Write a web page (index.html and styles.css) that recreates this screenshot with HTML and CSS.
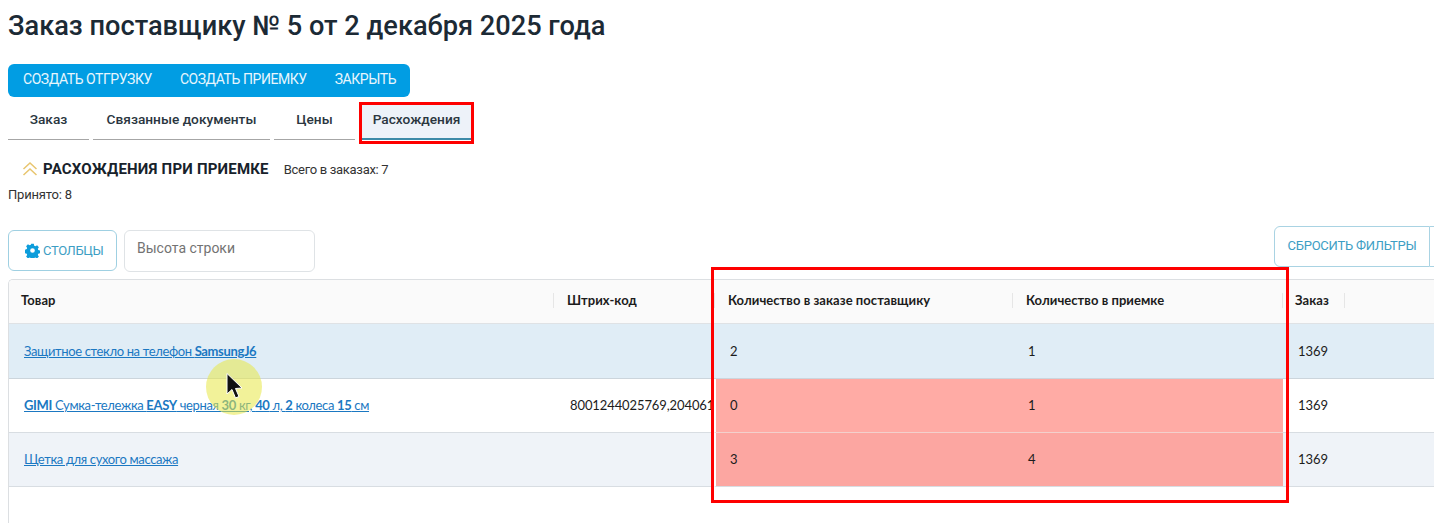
FILE: index.html
```html
<!DOCTYPE html>
<html lang="ru">
<head>
	<meta charset="utf-8">
	<title>Заказ поставщику № 5</title>
	<link rel="stylesheet" href="styles.css">
</head>
<body>

<h1 class="title">Заказ поставщику № 5 от 2 декабря 2025 года</h1>

<div class="actions">
	<a class="action">Создать отгрузку</a>
	<a class="action">Создать приемку</a>
	<a class="action">Закрыть</a>
</div>

<div class="tabs">
	<a class="tab tab-order">Заказ</a>
	<a class="tab tab-docs">Связанные документы</a>
	<a class="tab tab-prices">Цены</a>
	<a class="tab tab-diff active">Расхождения</a>
</div>

<div class="summary">
	<svg class="chevrons" width="16" height="16" viewBox="0 0 16 16" fill="none" stroke="#e8c56e" stroke-width="1.5">
		<path d="M1.5 8 8 2l6.5 6"/>
		<path d="M1.5 14 8 8l6.5 6"/>
	</svg>
	<span class="summary-title">Расхождения при приемке</span>
	<span class="summary-text">Всего в заказах: 7</span>
</div>
<div class="accepted">Принято: 8</div>

<div class="toolbar">
	<a class="btn-columns">
		<svg width="15" height="15" viewBox="0 0 16 16" fill="#0d9ddb">
			<path fill-rule="evenodd" d="M6.600 0.800h2.800l.4 2 1.300.6 1.800-1 1.900 2.100-1.100 1.700.4 1.300 2 .6v2.800l-2 .5-.4 1.300 1.100 1.700-1.900 2.100-1.800-1.100-1.300.6-.4 2H6.600l-.4-2-1.300-.6-1.800 1.100-1.900-2.100 1.100-1.700-.4-1.300-2-.5V7.100l2-.6.4-1.300-1.100-1.700 1.900-2.100 1.800 1 1.300-.6zM8 5.500a2.500 2.500 0 1 0 0 5 2.500 2.500 0 0 0 0-5z"/>
		</svg>
		Столбцы
	</a>
	<div class="row-height">Высота строки</div>
	<div class="toolbar-right">
		<a class="btn-reset">Сбросить фильтры</a>
		<a class="btn-more"></a>
	</div>
</div>

<div class="grid-wrap">
	<table class="grid">
		<colgroup>
			<col class="col-name">
			<col class="col-code">
			<col class="col-qty-order">
			<col class="col-qty-recv">
			<col class="col-order">
			<col>
		</colgroup>
		<thead>
			<tr>
				<th><span class="th-in">Товар</span></th>
				<th><span class="th-in">Штрих-код</span></th>
				<th><span class="th-in">Количество в заказе поставщику</span></th>
				<th><span class="th-in">Количество в приемке</span></th>
				<th><span class="th-in th-order">Заказ</span></th>
				<th><span class="th-in">&nbsp;</span></th>
			</tr>
		</thead>
		<tbody>
			<tr class="row-hover">
				<td><a class="link">Защитное стекло на телефон <b>SamsungJ6</b></a></td>
				<td></td>
				<td>2</td>
				<td>1</td>
				<td class="order">1369</td>
				<td></td>
			</tr>
			<tr class="row-plain">
				<td><a class="link"><b>GIMI</b> Сумка-тележка <b>EASY</b> черная <b>30</b> кг, <b>40</b> л, <b>2</b> колеса <b>15</b> см</a></td>
				<td class="code">8001244025769,2040613</td>
				<td class="bad bad-first">0</td>
				<td class="bad">1</td>
				<td class="order">1369</td>
				<td></td>
			</tr>
			<tr class="row-alt">
				<td><a class="link">Щетка для сухого массажа</a></td>
				<td></td>
				<td class="bad bad-dark bad-first">3</td>
				<td class="bad bad-dark">4</td>
				<td class="order">1369</td>
				<td></td>
			</tr>
		</tbody>
	</table>
</div>

<!-- пометки поверх скриншота -->
<div class="mark mark-tab"></div>
<div class="mark mark-cols"></div>
<div class="pointer">
	<svg width="22" height="29" viewBox="0 0 22 29">
		<path d="M2 .5V21l5-4.500 3.500 8.500 3.500-1.500-3.500-8 6.500-.5z" fill="#111" stroke="#fff" stroke-width="1"/>
	</svg>
</div>

</body>
</html>
```

FILE: styles.css
```css
html, body {
	margin: 0;
	height: 100%;
	overflow: hidden;
	background: #fff;
}
body {
	position: relative;
	padding: 0 0 0 8px;
	box-sizing: border-box;
	font-family: Roboto, "Liberation Sans", sans-serif;
	color: #1f2a33;
}
a { cursor: pointer; }

.title {
	margin: 0;
	padding-top: 11px;
	height: 64px;
	box-sizing: border-box;
	font-size: 27.2px;
	line-height: 31px;
	font-weight: 500;
	color: #1c2a35;
}

.actions {
	display: flex;
	height: 33px;
	width: 402px;
	box-sizing: border-box;
	background: #019de3;
	border-radius: 6px;
	padding: 0 14px 3px 15px;
	justify-content: space-between;
	align-items: center;
}
.action {
	color: #e8f6fd;
	font-size: 14px;
	text-transform: uppercase;
	letter-spacing: -0.45px;
}

.tabs {
	display: flex;
	gap: 4px;
	height: 38px;
	margin-top: 5px;
}
.tab {
	box-sizing: border-box;
	height: 38px;
	padding-top: 9px;
	text-align: center;
	font-size: 13.7px;
	font-weight: 500;
	line-height: 17px;
	color: #2a3640;
	border-bottom: 1px solid #a6a6a6;
}
.tab-order { width: 81px; }
.tab-docs { width: 177px; }
.tab-prices { width: 81px; }
.tab-diff { width: 109px; margin-left: 3px; }
.tab.active {
	background: #edf2f9;
	border-bottom: 2px solid #3d8aa8;
}

.summary {
	display: flex;
	align-items: center;
	height: 20px;
	margin-top: 19px;
	padding-left: 14px;
}
.chevrons { margin-right: 5px; }
.summary-title {
	font-size: 15px;
	font-weight: 700;
	text-transform: uppercase;
	color: #17222b;
	margin-right: 15px;
	letter-spacing: 0.2px;
}
.summary-text {
	font-size: 13px;
	letter-spacing: -0.3px;
	color: #333;
}
.accepted {
	margin-top: 8px;
	font-size: 13px;
	line-height: 16px;
	letter-spacing: -0.2px;
	color: #333;
}

.toolbar {
	display: flex;
	align-items: flex-start;
	margin-top: 26px;
	height: 49px;
}
.btn-columns {
	display: flex;
	align-items: center;
	gap: 3px;
	box-sizing: border-box;
	width: 109px;
	height: 41px;
	margin-top: 1px;
	padding-left: 16px;
	border: 1px solid #9fd0e2;
	border-radius: 6px;
	color: #3d9ec4;
	font-size: 13px;
	text-transform: uppercase;
	letter-spacing: -0.35px;
}
.row-height {
	box-sizing: border-box;
	width: 191px;
	height: 42px;
	margin: 1px 0 0 7px;
	padding: 8px 12px 0;
	border: 1px solid #dfe3e6;
	border-radius: 6px;
	font-size: 14px;
	line-height: 18px;
	color: #737373;
}
.toolbar-right {
	display: flex;
	margin-left: auto;
	margin-top: -3px;
}
.btn-reset {
	box-sizing: border-box;
	width: 156px;
	height: 41px;
	padding-top: 11px;
	text-align: center;
	border: 1px solid #a9d3e3;
	border-radius: 6px 0 0 6px;
	color: #3d9ec4;
	font-size: 13px;
	line-height: 16px;
	text-transform: uppercase;
	letter-spacing: -0.25px;
}
.btn-more {
	width: 4px;
	height: 41px;
	border: 1px solid #a9d3e3;
	border-left: 0;
	border-right: 0;
	box-sizing: border-box;
}

.grid-wrap {
	position: absolute;
	left: 8px;
	right: 0;
	top: 279px;
	bottom: 0;
	overflow: hidden;
	border-top: 1px solid #dcdfe2;
	border-left: 1px solid #dcdfe2;
	border-radius: 5px 0 0 0;
}
.grid {
	width: 100%;
	table-layout: fixed;
	border-collapse: separate;
	border-spacing: 0;
	font-family: Lato, "Noto Sans", sans-serif;
	font-size: 13px;
	color: #1c1c1c;
}
.col-name { width: 544px; }
.col-code { width: 161px; }
.col-qty-order { width: 298px; }
.col-qty-recv { width: 271px; }
.col-order { width: 61px; }

.grid th {
	box-sizing: border-box;
	height: 44px;
	padding: 0 0 2px;
	background: #fafafa;
	border-bottom: 1px solid #dfe2e5;
	text-align: left;
	font-weight: 700;
}
.th-in {
	display: block;
	padding-left: 13px;
	line-height: 15px;
	border-left: 1px solid #e6e6e6;
	white-space: nowrap;
	letter-spacing: 0.05px;
}
.grid th:first-child .th-in { border-left: 0; padding-left: 12px; }
.grid th .th-order { margin-left: -1px; padding-left: 12px; }

.grid td {
	height: 53px;
	padding: 0 0 1px 16px;
	box-sizing: border-box;
	border-bottom: 1px solid #d8dde2;
	white-space: nowrap;
	overflow: hidden;
}
.row-hover td { height: 55px; padding-bottom: 0; background: #e0edf6; border-bottom-color: #ccd5dc; }
.row-plain td { height: 54px; background: #fff; }
.row-alt td { height: 54px; background: #eff3f8; }
.grid td:first-child { padding-left: 15px; }
.grid td.code { padding-left: 17px; letter-spacing: -0.1px; }
.grid td.order { padding-left: 15px; }
.grid td.bad { background: #ffaba5; border-bottom-color: #f3d0cc; }
.grid td.bad-dark { background: #fca6a1; border-bottom-color: #d8dde2; }
.grid td.bad-first { border-left: 2px solid #fff; padding-left: 14px; }

.link {
	color: #1b78c2;
	text-decoration: underline;
	letter-spacing: -0.36px;
}
.link b { font-weight: 700; }

.mark {
	position: absolute;
	box-sizing: border-box;
	border: 3px solid #fe0000;
	pointer-events: none;
}
.mark-tab {
	left: 359px;
	top: 102px;
	width: 115px;
	height: 42px;
}
.mark-cols {
	left: 711px;
	top: 267px;
	width: 578px;
	height: 236px;
}
.pointer {
	position: absolute;
	left: 206px;
	top: 359px;
	width: 56px;
	height: 56px;
	border-radius: 50%;
	background: rgba(232, 232, 70, 0.55);
}
.pointer svg {
	position: absolute;
	left: 19px;
	top: 14px;
}
```
